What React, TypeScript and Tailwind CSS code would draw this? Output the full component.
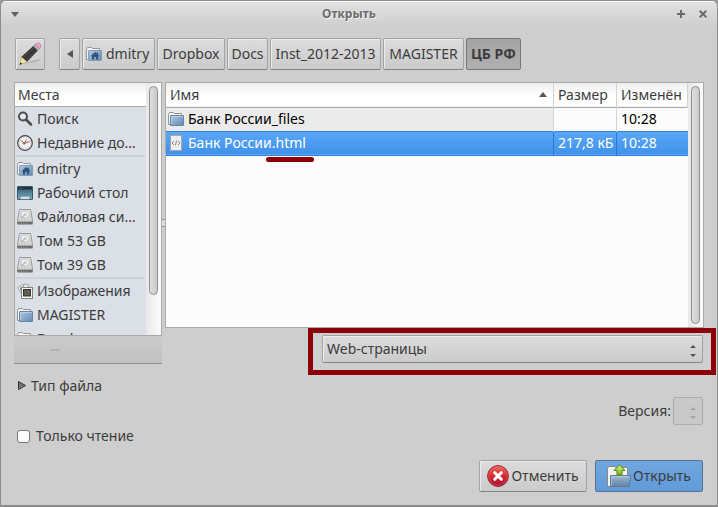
import type { ReactNode } from "react";

const buttonFace =
  "rounded-xs border border-[#a3a3a3] border-b-[#858585] bg-linear-to-b from-[#dcdcdc] to-[#cbcbcb] shadow-[inset_1px_1px_0_#ececec]";

function Gradients() {
  return (
    <svg className="absolute size-0" aria-hidden="true">
      <defs>
        <linearGradient id="blue" x1="0" y1="0" x2="1" y2="1">
          <stop offset="0" stopColor="#b3cbe2" />
          <stop offset="1" stopColor="#6288b3" />
        </linearGradient>
        <linearGradient id="slate" x1="0" y1="0" x2="0" y2="1">
          <stop offset="0" stopColor="#a5bcd6" />
          <stop offset="0.5" stopColor="#7f9dbf" />
          <stop offset="1" stopColor="#6483a8" />
        </linearGradient>
        <linearGradient id="screen" x1="0" y1="0" x2="0" y2="1">
          <stop offset="0" stopColor="#2c4f66" />
          <stop offset="1" stopColor="#7fb4cf" />
        </linearGradient>
        <linearGradient id="red" x1="0" y1="0" x2="0" y2="1">
          <stop offset="0" stopColor="#ee6a60" />
          <stop offset="0.5" stopColor="#d52a31" />
          <stop offset="1" stopColor="#a9103a" />
        </linearGradient>
        <linearGradient id="green" x1="0" y1="0" x2="0" y2="1">
          <stop offset="0" stopColor="#d6f08a" />
          <stop offset="1" stopColor="#7cb518" />
        </linearGradient>
        <linearGradient id="metal" x1="0" y1="0" x2="0" y2="1">
          <stop offset="0" stopColor="#e6e6e6" />
          <stop offset="1" stopColor="#cccccc" />
        </linearGradient>
      </defs>
    </svg>
  );
}

function Icon({ children }: { children: ReactNode }) {
  return (
    <svg viewBox="0 0 16 16" className="size-4 shrink-0" aria-hidden="true">
      {children}
    </svg>
  );
}

function FolderIcon() {
  return (
    <Icon>
      <path d="M.5 13.500V3.500l1-2h4l1 1h7v11z" fill="#f5f5f5" stroke="#959595" />
      <rect x="2.500" y="4.500" width="13" height="10" rx=".5" fill="url(#blue)" stroke="#6485a8" />
      <path d="M3.500 13V5.500H15" fill="none" stroke="#cfdeed" strokeWidth=".6" />
    </Icon>
  );
}

function HomeIcon() {
  return (
    <Icon>
      <path d="M.5 13.500V3.500l1-2h4l1 1h7v11z" fill="#f5f5f5" stroke="#959595" />
      <rect x="2.500" y="4.500" width="13" height="10" rx=".5" fill="url(#blue)" stroke="#7f9cbb" />
      <path d="M9 6L4.500 10.200H6V13.500h2V11h2v2.500h2v-3.300h1.500L12 8.500V6.500h-1v1z" fill="#33547a" />
    </Icon>
  );
}

function SearchIcon() {
  return (
    <Icon>
      <circle cx="6" cy="5.500" r="4" fill="#e4e8ec" stroke="#4c4c4c" strokeWidth="2" />
      <path d="M9 8.500l5 5" stroke="#4c4c4c" strokeWidth="2.500" strokeLinecap="round" />
    </Icon>
  );
}

function RecentIcon() {
  return (
    <Icon>
      <circle cx="8" cy="8" r="7.300" fill="#f4f4f4" stroke="#444" strokeWidth="1.200" />
      <circle cx="8" cy="8" r="5.800" fill="none" stroke="#bbb" strokeWidth=".8" strokeDasharray="1.500 1" />
      <path d="M7.500 8L3.500 5.500M7.500 8l2-3.500" stroke="#666" strokeWidth=".9" />
      <path d="M5.500 9l7-2.500" stroke="#e04646" strokeWidth="1.200" />
      <circle cx="7.500" cy="8.500" r="1" fill="#777" />
    </Icon>
  );
}

function DesktopIcon() {
  return (
    <Icon>
      <rect x=".5" y="1.500" width="15" height="13" rx=".5" fill="url(#screen)" stroke="#35586c" />
      <path d="M1 2h14v2.500H1z" fill="#25323a" />
      <path d="M2 3.200h4" stroke="#4f6877" strokeWidth=".8" />
      <path d="M3 14.500v-3.500h10v3.500z" fill="#d6dcdc" stroke="#4b7385" strokeWidth=".8" />
    </Icon>
  );
}

function DriveIcon() {
  return (
    <Icon>
      <path d="M2.500.5h11l2 11v3h-15v-3z" fill="url(#metal)" stroke="#9a9a9a" />
      <path d="M.5 12.500h15V15.500H.5z" fill="#6b6b6b" />
      <path d="M1 12h14" stroke="#c4c4c4" />
      <path d="M2 14.300h9" stroke="#999" strokeDasharray="1 1" />
      <ellipse cx="8" cy="5.500" rx="4.600" ry="3.800" fill="#ececec" stroke="#c2c2c2" />
      <path d="M8 5.500L4 9.500" stroke="#b8b8b8" strokeWidth="1.200" />
      <circle cx="8.500" cy="5.500" r="1.200" fill="#c6c6c6" />
    </Icon>
  );
}

function PicturesIcon() {
  return (
    <Icon>
      <path d="M.5 4.500l5.500-3 4 6-5 4z" fill="#f2f2f2" stroke="#9a9a9a" strokeWidth=".8" />
      <path d="M2.500 5l2.500-1.500 1.500 2-2.500 3z" fill="#8a8a8a" />
      <path d="M7 .8l5 1.200-1 4H6z" fill="#ececec" stroke="#8f8f8f" strokeWidth=".8" />
      <rect x="4.500" y="4.500" width="11" height="11" fill="#fafafa" stroke="#808080" />
      <rect x="6.500" y="6.500" width="7" height="6.500" fill="#5d6050" stroke="#33352d" />
    </Icon>
  );
}

function HtmlIcon() {
  return (
    <Icon>
      <path d="M2.500.5h11v15h-11z" fill="#ededed" stroke="#a7a7a7" />
      <path d="M6 6L4 8l2 2M10 6l2 2-2 2M8.800 5.500l-1.600 5" fill="none" stroke="#8d8d8d" />
    </Icon>
  );
}

function PencilIcon() {
  return (
    <svg viewBox="0 0 24 24" className="size-6" aria-hidden="true">
      <path d="M8 20.500L21 17.300q2.500 0 1 1.200Q17 20.500 6 21.800z" fill="#b0b0b0" />
      <path d="M3.200 15L15.500 3.800l4.700 4.400L9 19.800z" fill="#353535" />
      <path d="M5 16L17 5M7.500 18.500L19 7.500" stroke="#5c5c5c" strokeWidth=".8" />
      <path d="M15.300 4l2-1.700 4.400 4.200-1.800 2z" fill="#b4b4b4" stroke="#8a8a8a" strokeWidth=".5" />
      <path d="M17.200 2.300Q19.300.3 21.800 1.400q2 1.700.9 3.900L21.600 6.500z" fill="#eba6cd" stroke="#b5769c" strokeWidth=".7" />
      <path d="M3.200 15L9 19.800l-6.800 2.700z" fill="#f0e8a4" stroke="#a89d58" strokeWidth=".6" />
      <path d="M2.400 20.400l1.800 1.400-2.700 1.200z" fill="#222" />
    </svg>
  );
}

function CancelIcon() {
  return (
    <svg viewBox="0 0 22 22" className="size-[22px]" aria-hidden="true">
      <circle cx="11" cy="11" r="10.400" fill="url(#red)" stroke="#9b1c2a" />
      <circle cx="11" cy="11" r="9.300" fill="none" stroke="#f08a80" strokeWidth=".7" opacity=".5" />
      <path d="M7.700 7.700l6.600 6.600M14.300 7.700l-6.600 6.600" stroke="#fff" strokeWidth="3" strokeLinecap="round" />
    </svg>
  );
}

function OpenIcon() {
  return (
    <svg viewBox="0 0 24 24" className="size-6" aria-hidden="true">
      <path d="M.5 22.500V4.500l1-2h6l1 1h12v19z" fill="#f2f2ee" stroke="#8c8c84" />
      <path d="M3.500 11.500h20l-1 11h-19z" fill="url(#slate)" stroke="#5d7c9f" />
      <path d="M4.500 21.500v-9h18" fill="none" stroke="#c4d4e6" strokeWidth=".6" />
      <path d="M12.500.8l5.500 5.700h-3v4.500h-5V6.500H7z" fill="url(#green)" stroke="#4e8a0c" />
    </svg>
  );
}

function Spinner({ className }: { className: string }) {
  return (
    <svg viewBox="0 0 6 12" className={`pointer-events-none absolute h-3 w-1.5 ${className}`} aria-hidden="true">
      <path d="M3 0l3 3H0zM3 12l3-3H0z" fill="currentColor" />
    </svg>
  );
}

const places: { label: string; icon: ReactNode; divider?: boolean }[] = [
  { label: "Поиск", icon: <SearchIcon /> },
  { label: "Недавние до...", icon: <RecentIcon /> },
  { label: "dmitry", icon: <HomeIcon />, divider: true },
  { label: "Рабочий стол", icon: <DesktopIcon /> },
  { label: "Файловая си...", icon: <DriveIcon /> },
  { label: "Том 53 GB", icon: <DriveIcon /> },
  { label: "Том 39 GB", icon: <DriveIcon /> },
  { label: "Изображения", icon: <PicturesIcon />, divider: true },
  { label: "MAGISTER", icon: <FolderIcon /> },
  { label: "Dropbox", icon: <FolderIcon /> },
];

const crumbs = [
  { name: "Dropbox", width: "w-[68px]" },
  { name: "Docs", width: "w-[41px]" },
  { name: "Inst_2012-2013", width: "w-[111px]" },
  { name: "MAGISTER", width: "w-[81px]" },
];

function TitleBar() {
  return (
    <header className="flex h-[26px] items-center bg-linear-to-b from-[#e2e2e2] to-[#cecece] px-2.5 text-[#6c6c6c] shadow-[inset_0_1px_0_#f8f8f8]">
      <button aria-label="Меню окна" className="w-7">
        <svg viewBox="0 0 8 5" className="h-[5px] w-2">
          <path d="M0 0h8L4 5z" fill="#606060" />
        </svg>
      </button>
      <h1 className="flex-1 text-center text-xs font-bold [text-shadow:1px_1px_0_#f2f2f2]">Открыть</h1>
      <div className="flex w-12 items-center justify-end gap-3.5">
        <button aria-label="Развернуть">
          <svg viewBox="0 0 8 8" className="size-2">
            <path d="M4 0v8M0 4h8" stroke="#6c6c6c" strokeWidth="2" />
          </svg>
        </button>
        <button aria-label="Закрыть">
          <svg viewBox="0 0 8 8" className="size-2">
            <path d="M.7.7l6.600 6.600M7.300.7L.7 7.300" stroke="#6c6c6c" strokeWidth="2" />
          </svg>
        </button>
      </div>
    </header>
  );
}

function PathBar() {
  return (
    <nav className="mt-[11px] flex h-8 gap-0.5">
      <button aria-label="Ввести имя файла" className={`mr-3 flex w-[30px] items-center justify-center ${buttonFace}`}>
        <PencilIcon />
      </button>
      <button aria-label="Назад" className={`flex w-[21px] items-center justify-center ${buttonFace}`}>
        <svg viewBox="0 0 6 8" className="h-2 w-1.5">
          <path d="M6 0v8L0 4z" fill="#555" />
        </svg>
      </button>
      <button className={`flex w-[73px] items-center gap-1 px-[3px] ${buttonFace}`}>
        <HomeIcon />
        dmitry
      </button>
      {crumbs.map(({ name, width }) => (
        <button key={name} className={`${width} ${buttonFace}`}>
          {name}
        </button>
      ))}
      <button className="rounded-xs border border-[#777] bg-linear-to-b from-[#a4a4a4] to-[#b0b0b0] px-1 font-bold">
        ЦБ РФ
      </button>
    </nav>
  );
}

function ScrollTrack({ thumb }: { thumb: string }) {
  return (
    <div className="w-[15px] shrink-0 bg-linear-to-r from-[#e8e8e8] to-[#fcfcfc] px-[3px] py-[3px]">
      <div
        className={`w-[9px] rounded-full border border-[#8e8e8e] bg-linear-to-r from-[#dedede] to-[#cacaca] ${thumb}`}
      />
    </div>
  );
}

function Places() {
  return (
    <aside className="flex w-[148px] shrink-0 flex-col">
      <div className="flex h-[254px] overflow-hidden border border-[#a9a9a9]">
        <div className="min-w-0 flex-1 bg-[#dbdfe6]">
          <h2 className="h-6 border-b border-[#ababab] bg-linear-to-b from-[#efefef] to-white to-60% px-[3px] leading-[23px]">
            Места
          </h2>
          <ul>
            {places.map((place) => (
              <li
                key={place.label}
                className={place.divider ? "mx-px border-t-2 border-[#ccd1da]" : "mx-px"}
              >
                <button className="flex h-6 w-full items-center gap-1 px-px text-left whitespace-nowrap">
                  {place.icon}
                  {place.label}
                </button>
              </li>
            ))}
          </ul>
        </div>
        <ScrollTrack thumb="h-[209px]" />
      </div>
      <div className="flex h-7 items-center gap-4 border-b border-[#8f8f8f] bg-linear-to-b from-[#cacaca] to-[#c2c2c2] px-2.5">
        <button aria-label="Добавить" className="size-2.5" />
        <button aria-label="Удалить" className="flex h-2.5 w-2.5 items-center">
          <span className="h-0.5 w-full bg-[#b3b3b3]" />
        </button>
      </div>
    </aside>
  );
}

function Files() {
  return (
    <div className="flex h-[246px] border border-[#a9a9a9] bg-[#fcfcfc]">
      <div className="min-w-0 flex-1">
        <table className="w-full table-fixed border-collapse text-left">
          <colgroup>
            <col />
            <col className="w-[63px]" />
            <col className="w-[71px]" />
          </colgroup>
          <thead>
            <tr className="h-6 border-b border-[#ababab] bg-linear-to-b from-[#efefef] to-white to-60%">
              <th className="border-r border-[#d3d3d3] p-0 pr-1.5 pl-1 font-normal">
                <div className="flex items-center justify-between">
                  Имя
                  <svg viewBox="0 0 8 5" className="h-[5px] w-2">
                    <path d="M0 5h8L4 0z" fill="#555" />
                  </svg>
                </div>
              </th>
              <th className="border-r border-[#d3d3d3] p-0 pl-1 font-normal">Размер</th>
              <th className="border-r border-[#d3d3d3] p-0 pl-1 font-normal">Изменён</th>
            </tr>
          </thead>
          <tbody>
            <tr className="h-6 text-black">
              <td className="border-r border-[#d3d3d3] bg-[#ebebeb] p-0 pl-0.5">
                <div className="flex items-center gap-1">
                  <FolderIcon />
                  Банк России_files
                </div>
              </td>
              <td className="border-r border-[#d3d3d3] p-0" />
              <td className="p-0 pl-1">10:28</td>
            </tr>
            <tr className="h-6 border-y border-[#2f83da] bg-linear-to-b from-[#5ba7f8] to-[#3f91ea] text-white">
              <td className="border-r border-r-[#2b77c8] p-0 pl-0.5">
                <div className="flex items-center gap-1">
                  <HtmlIcon />
                  <span>
                    Банк России
                    <span className="relative">
                      .html
                      <span className="absolute top-6 -right-2 -left-1.5 h-[5px] rounded-full bg-[#8b0009]" />
                    </span>
                  </span>
                </div>
              </td>
              <td className="border-r border-r-[#2b77c8] p-0 pl-1 whitespace-nowrap">217,8 кБ</td>
              <td className="p-0 pl-1">10:28</td>
            </tr>
          </tbody>
        </table>
      </div>
      <ScrollTrack thumb="h-full" />
    </div>
  );
}

export default function App() {
  return (
    <div className="min-h-screen bg-[#9a9a9a]">
      <main className="flex min-h-[507px] flex-col overflow-hidden rounded-t-md border border-b-2 border-[#8b8b8b] bg-[#cecece] font-['Noto_Sans','Open_Sans',sans-serif] text-sm leading-5 text-[#3c3c3c]">
        <Gradients />
        <TitleBar />
        <div className="px-[13px]">
          <div className="pl-px">
            <PathBar />
          </div>
          <div className="mt-3 flex">
            <Places />
            <div className="flex w-[3px] shrink-0 items-center justify-center">
              <div className="h-2 w-[3px] border-y border-[#999] bg-[#ddd]" />
            </div>
            <section className="min-w-0 flex-1">
              <Files />
              <div className="relative mt-[7px] mr-px ml-[157px]">
                <select
                  aria-label="Фильтр файлов"
                  className={`block h-7 w-full appearance-none pr-6 pl-1 text-[#3c3c3c] ${buttonFace}`}
                >
                  <option>Web-страницы</option>
                </select>
                <Spinner className="top-2.5 right-[7px] text-[#555]" />
                <div className="pointer-events-none absolute -top-[7px] -right-[13px] -bottom-3 -left-3.5 border-5 border-[#8b0009]" />
              </div>
            </section>
          </div>
          <div className="pr-px">
            <button className="mt-2.5 flex h-[23px] items-center gap-[5px] px-1">
              <svg viewBox="0 0 8 9" className="h-[9px] w-2">
                <path d="M.5.5v8l7-4z" fill="#777" stroke="#333" />
              </svg>
              Тип файла
            </button>
            <div className="flex h-7 items-center justify-end gap-0.5">
              <label htmlFor="version">Версия:</label>
              <div className="relative">
                <select
                  id="version"
                  disabled
                  className="block h-7 w-[30px] appearance-none rounded-xs border border-[#adadad] bg-[#c9c9c9]"
                />
                <Spinner className="top-2.5 right-[7px] text-[#a3a3a3]" />
              </div>
            </div>
            <label className="flex h-[22px] w-fit items-center gap-1.5 pl-[3px]">
              <input
                type="checkbox"
                className="size-[13px] appearance-none rounded-[3px] border border-[#777] bg-[#fcfcfc] checked:bg-[#4a90d9]"
              />
              Только чтение
            </label>
            <div className="mt-[13px] mb-3 flex justify-end gap-2">
              <button className={`flex h-8 w-[108px] items-center justify-center gap-0.5 ${buttonFace}`}>
                <CancelIcon />
                Отменить
              </button>
              <button className="flex h-8 w-[108px] items-center justify-center gap-0.5 rounded-xs border border-[#59738f] bg-linear-to-b from-[#70a6df] to-[#609bd9]">
                <OpenIcon />
                Открыть
              </button>
            </div>
          </div>
        </div>
      </main>
    </div>
  );
}
